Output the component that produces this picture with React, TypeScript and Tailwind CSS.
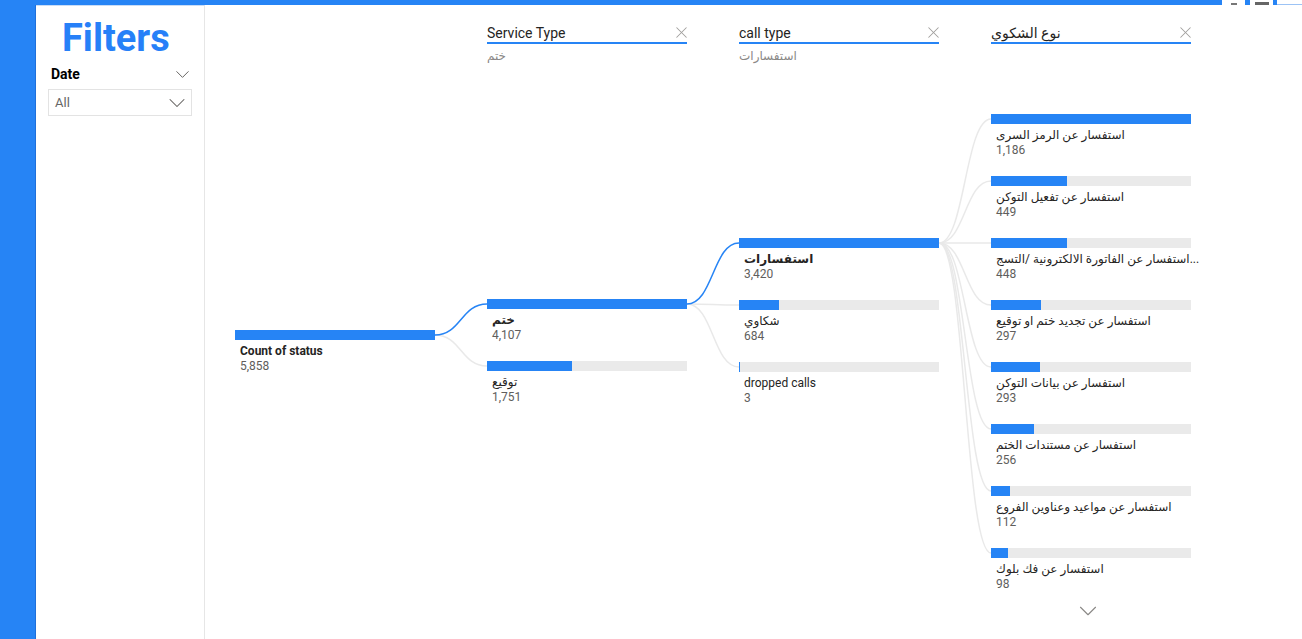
import React from 'react';
import { X, ChevronDown } from 'lucide-react';

type TreeNode = { label: string; value: number; bold?: boolean };
type Level = { title?: string; sub?: string; offset: string; top: number; nodes: TreeNode[] };

// geometry of the tree canvas (px, relative to the main area)
const COL_LEFT = 30;
const COL_STEP = 252;
const BAR_W = 200;
const ROW_H = 62;

const levels: Level[] = [
  { offset: 'mt-[260px]', top: 325, nodes: [{ label: 'Count of status', value: 5858, bold: true }] },
  {
    title: 'Service Type',
    sub: 'ختم',
    offset: 'mt-[229px]',
    top: 294,
    nodes: [
      { label: 'ختم', value: 4107, bold: true },
      { label: 'توقيع', value: 1751 },
    ],
  },
  {
    title: 'call type',
    sub: 'استفسارات',
    offset: 'mt-[168px]',
    top: 233,
    nodes: [
      { label: 'استفسارات', value: 3420, bold: true },
      { label: 'شكاوي', value: 684 },
      { label: 'dropped calls', value: 3 },
    ],
  },
  {
    title: 'نوع الشكوي',
    offset: 'mt-[44px]',
    top: 109,
    nodes: [
      { label: 'استفسار عن الرمز السرى', value: 1186 },
      { label: 'استفسار عن تفعيل التوكن', value: 449 },
      { label: 'استفسار عن الفاتورة الالكترونية /التسج...', value: 448 },
      { label: 'استفسار عن تجديد ختم او توقيع', value: 297 },
      { label: 'استفسار عن بيانات التوكن', value: 293 },
      { label: 'استفسار عن مستندات الختم', value: 256 },
      { label: 'استفسار عن مواعيد وعناوين الفروع', value: 112 },
      { label: 'استفسار عن فك بلوك', value: 98 },
    ],
  },
];

// index of the expanded node in each level
const expanded = [0, 0, 0];

const barCenter = (level: number, row: number) => levels[level].top + 5 + row * ROW_H;

const curve = (x1: number, y1: number, x2: number, y2: number) => {
  const mx = (x1 + x2) / 2;
  return `M${x1} ${y1} C${mx} ${y1} ${mx} ${y2} ${x2} ${y2}`;
};

const Connectors: React.FC = () => {
  const paths: { d: string; active: boolean }[] = [];
  for (let l = 0; l < levels.length - 1; l++) {
    const x1 = COL_LEFT + COL_STEP * l + BAR_W;
    const x2 = COL_LEFT + COL_STEP * (l + 1);
    const y1 = barCenter(l, expanded[l]);
    const childActive = l + 1 < expanded.length ? expanded[l + 1] : -1;
    levels[l + 1].nodes.forEach((_, j) => {
      paths.push({ d: curve(x1, y1, x2, barCenter(l + 1, j)), active: j === childActive });
    });
  }
  return (
    <svg className="absolute inset-0 w-full h-full pointer-events-none" fill="none">
      {paths.filter((p) => !p.active).map((p, i) => (
        <path key={`g${i}`} d={p.d} stroke="#e9e9e9" strokeWidth={1.5} />
      ))}
      {paths.filter((p) => p.active).map((p, i) => (
        <path key={`b${i}`} d={p.d} stroke="#2684f5" strokeWidth={1.5} />
      ))}
    </svg>
  );
};

const NodeBar: React.FC<{ node: TreeNode; max: number }> = ({ node, max }) => {
  const pct = Math.max((node.value / max) * 100, 0.6);
  return (
    <div className="h-[62px] w-[200px]">
      <div className="h-[10px] bg-[#eaeaea]">
        <div className="h-full bg-[#2684f5]" style={{ width: `${pct}%` }} />
      </div>
      <div className="pl-[5px] pt-[4px] text-[12px] leading-[15px] whitespace-nowrap">
        <div className={node.bold ? 'font-bold text-[#252423]' : 'text-[#252423]'}>{node.label}</div>
        <div className="text-[#605e5c]">{node.value.toLocaleString('en-US')}</div>
      </div>
    </div>
  );
};

const LevelColumn: React.FC<{ level: Level; last: boolean }> = ({ level, last }) => {
  const max = Math.max(...level.nodes.map((n) => n.value));
  return (
    <div className="w-[200px] flex flex-col">
      <div className="h-[64px] pt-[17px]">
        {level.title && (
          <>
            <div className="flex items-center justify-between h-[21px] border-b-2 border-[#2684f5] text-[14px] text-[#252423]">
              <span className="leading-[20px]">{level.title}</span>
              <X size={19} strokeWidth={1.3} className="text-[#a19f9d] -mr-[4px]" />
            </div>
            {level.sub && <div className="mt-[4px] text-[12px] leading-[16px] text-[#8a8886]">{level.sub}</div>}
          </>
        )}
      </div>
      <div className={level.offset}>
        {level.nodes.map((n) => (
          <NodeBar key={n.label} node={n} max={max} />
        ))}
      </div>
      {last && (
        <div className="flex justify-center -mt-[14px] pr-[6px]">
          <ChevronDown size={30} strokeWidth={0.9} className="text-[#8a8886]" />
        </div>
      )}
    </div>
  );
};

const App: React.FC = () => {
  return (
    <div className="h-screen w-full overflow-hidden bg-white flex flex-col" style={{ fontFamily: 'Roboto, "DejaVu Sans", sans-serif' }}>
      {/* window strip */}
      <div className="h-[5px] flex shrink-0">
        <div className="flex-1 bg-[#2684f5]" />
        <div className="w-[23px] bg-white flex justify-center items-end">
          <div className="w-[6px] h-[2px] bg-[#777]" />
        </div>
        <div className="w-[5px] bg-[#2684f5]" />
        <div className="w-[23px] bg-white flex justify-center items-end">
          <div className="w-[14px] h-[3px] bg-[#666]" />
        </div>
        <div className="w-[4px] bg-[#2684f5]" />
        <div className="w-[25px] bg-white border-b border-[#9cc3f5]" />
      </div>

      <div className="flex flex-1 min-h-0">
        <div className="w-[36px] bg-[#2684f5] border-r border-[#1f70da]" />

        {/* filters pane */}
        <aside className="w-[169px] border-r border-[#e6e6e6] border-t border-t-[#c9dcf5] px-[12px]">
          <h1 className="mt-[10px] pl-[14px] text-[38px] leading-[44px] font-bold text-[#2680f8]">Filters</h1>
          <div className="mt-[3px] h-[22px] flex items-center justify-between pl-[3px] -mr-[2px]">
            <span className="text-[14px] font-bold text-black">Date</span>
            <ChevronDown size={23} strokeWidth={1} className="text-[#605e5c]" />
          </div>
          <div className="mt-[4px] h-[27px] border border-[#e3e3e3] flex items-center justify-between pl-[6px] pr-[0px]">
            <span className="text-[13px] text-[#666]">All</span>
            <ChevronDown size={28} strokeWidth={0.9} className="text-[#605e5c]" />
          </div>
        </aside>

        {/* decomposition tree */}
        <main className="relative flex-1 pt-[1px]">
          <Connectors />
          <div className="relative flex gap-[52px] pl-[30px]">
            {levels.map((lv, i) => (
              <LevelColumn key={i} level={lv} last={i === levels.length - 1} />
            ))}
          </div>
        </main>
      </div>
    </div>
  );
};

export default App;
